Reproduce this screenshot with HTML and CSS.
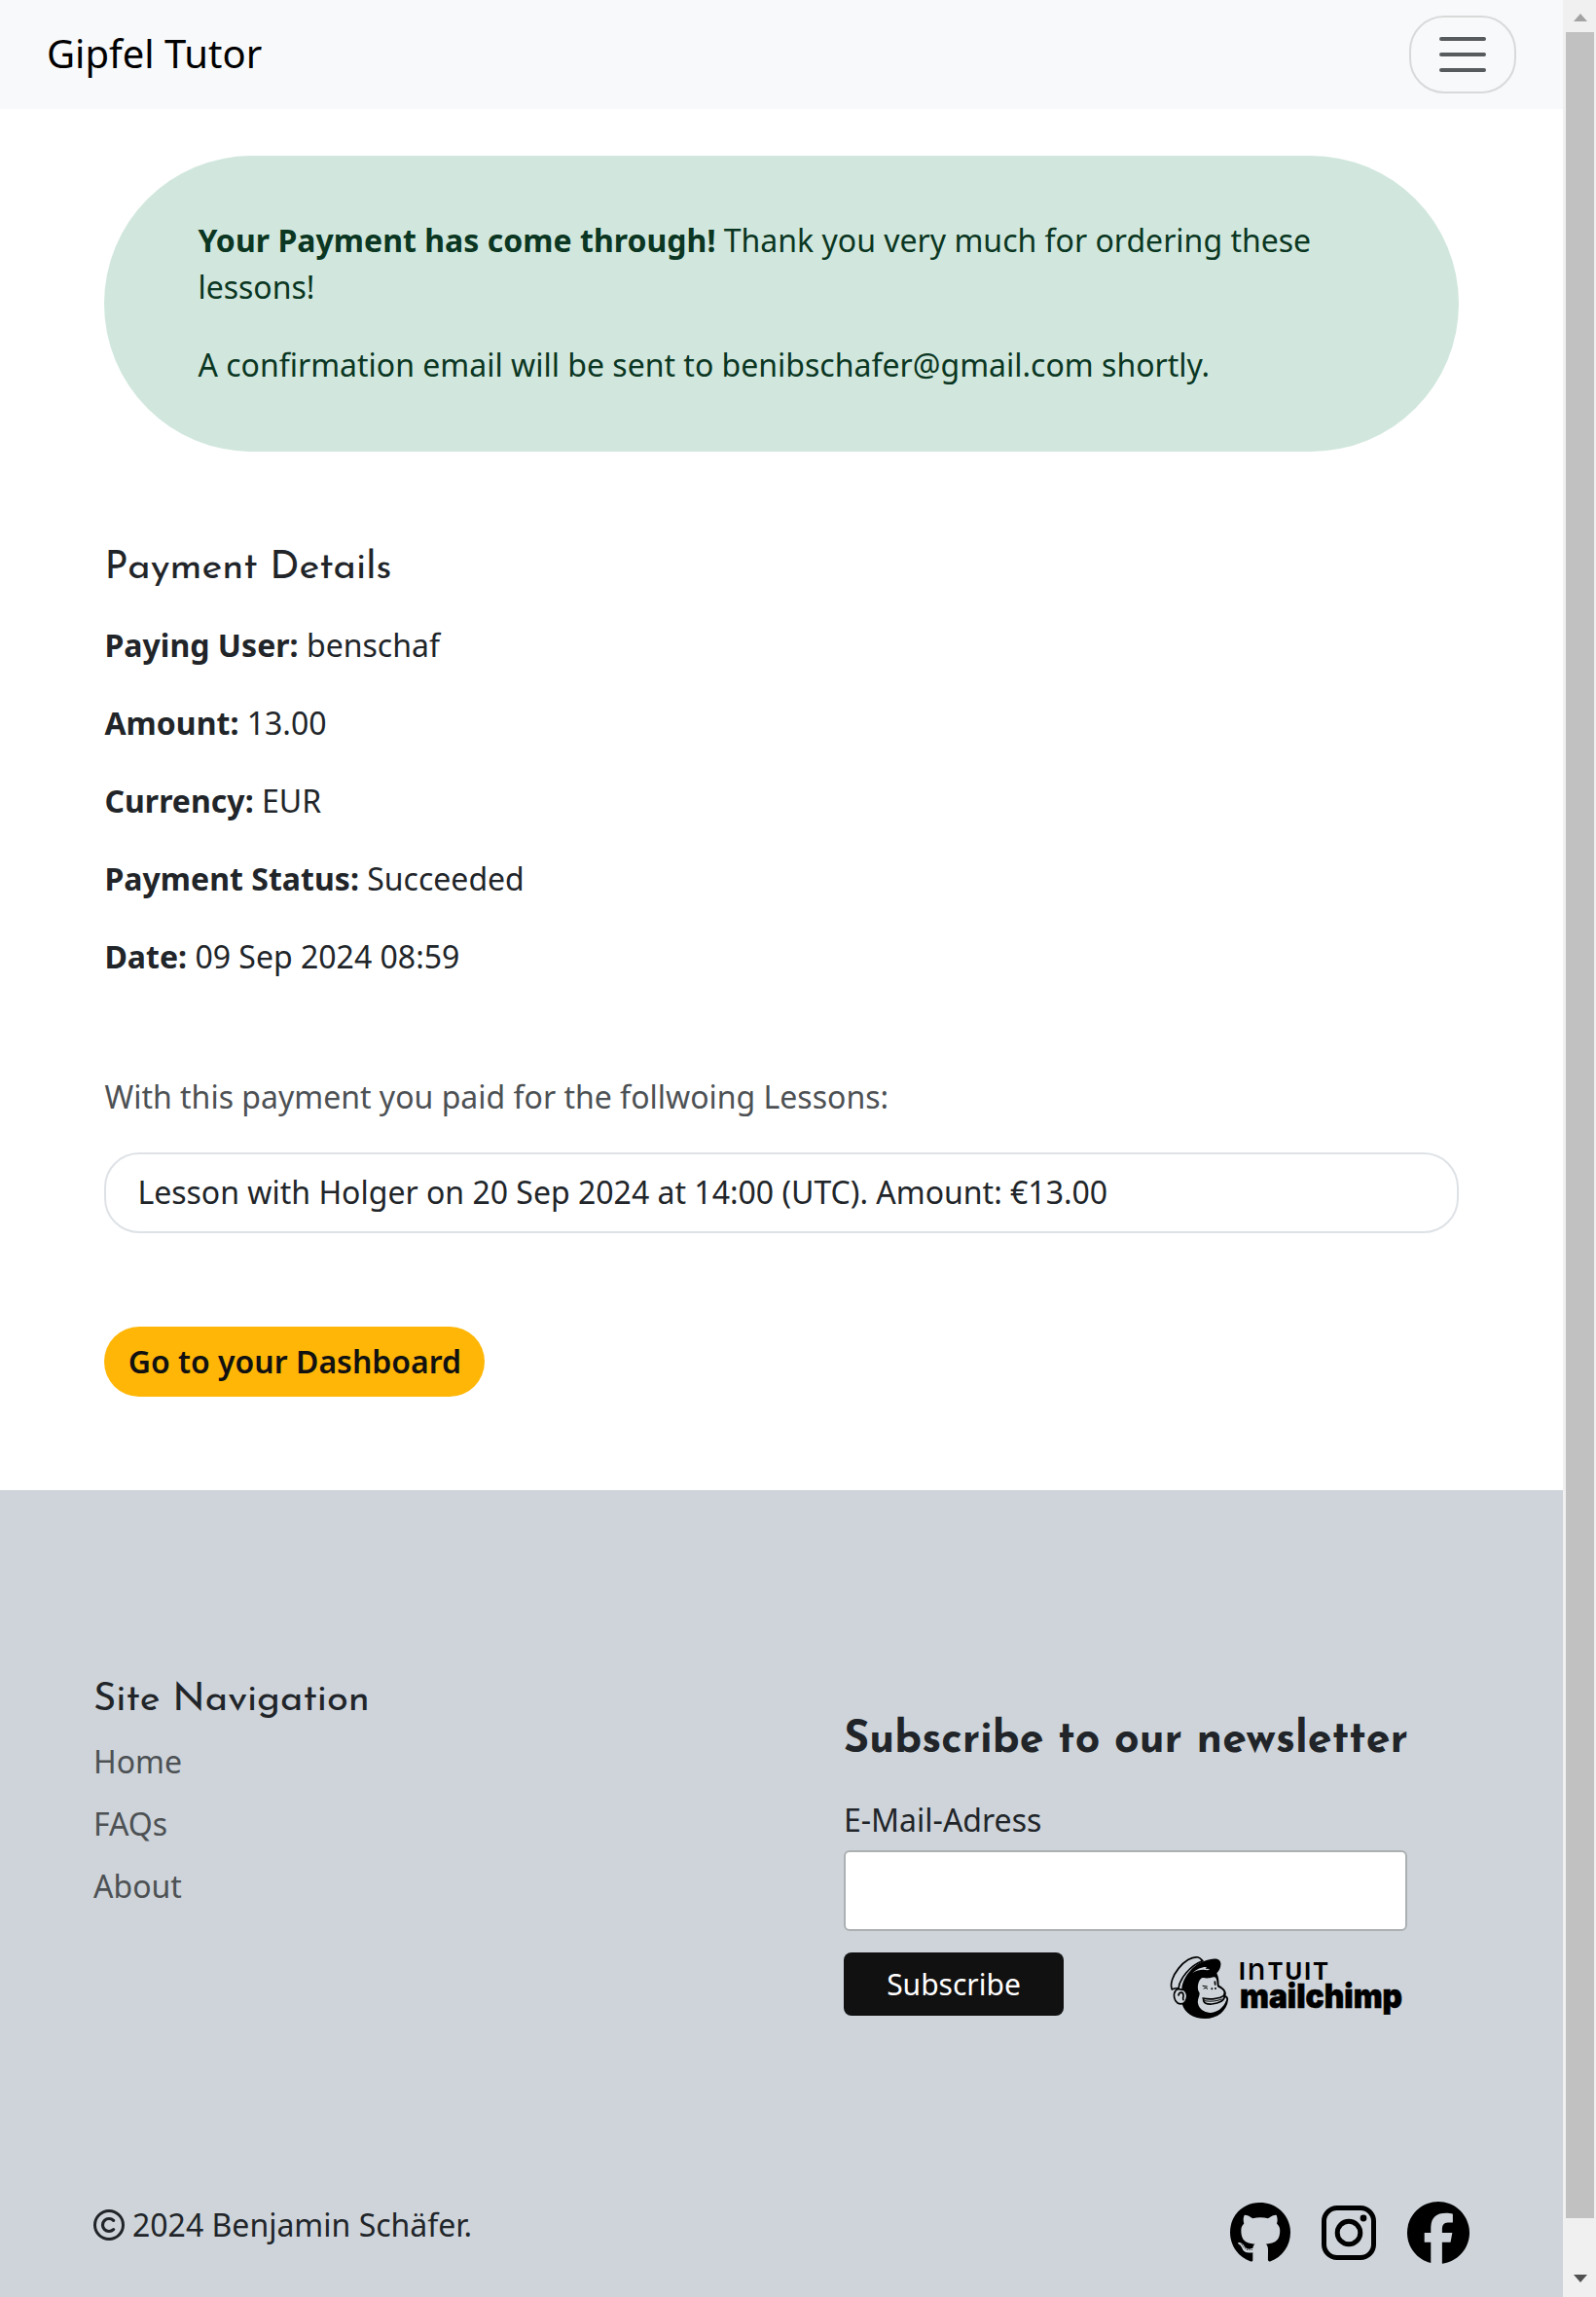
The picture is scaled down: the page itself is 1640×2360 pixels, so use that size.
FILE: index.html
```html
<!DOCTYPE html>
<html lang="en">
<head>
<meta charset="utf-8">
<title>Gipfel Tutor</title>
<link rel="stylesheet" href="styles.css">
</head>
<body>
<div class="page">
  <header class="navbar">
    <a class="brand">Gipfel Tutor</a>
    <button class="toggler" aria-label="Menu">
      <svg width="60" height="60" viewBox="0 0 30 30"><path stroke="#212529" stroke-opacity=".75" stroke-linecap="round" stroke-width="2" d="M4 7h22M4 15h22M4 23h22"/></svg>
    </button>
  </header>
  <main class="content">
    <section class="alert">
      <p><strong>Your Payment has come through!</strong> Thank you very much for ordering these lessons!</p>
      <p>A confirmation email will be sent to benibschafer@gmail.com shortly.</p>
    </section>
    <section class="details">
      <h2 class="heading details-title">Payment Details</h2>
      <p><strong>Paying User:</strong> benschaf</p>
      <p><strong>Amount:</strong> 13.00</p>
      <p><strong>Currency:</strong> EUR</p>
      <p><strong>Payment Status:</strong> Succeeded</p>
      <p><strong>Date:</strong> 09 Sep 2024 08:59</p>
    </section>
    <p class="lessons-intro">With this payment you paid for the follwoing Lessons:</p>
    <ul class="lessons"><li>Lesson with Holger on 20 Sep 2024 at 14:00 (UTC). Amount: €13.00</li></ul>
    <a class="dashboard">Go to your Dashboard</a>
  </main>
  <footer class="footer">
    <div class="footer-top">
      <nav class="site-nav">
        <h2 class="heading nav-title">Site Navigation</h2>
        <a>Home</a>
        <a>FAQs</a>
        <a>About</a>
      </nav>
      <form class="newsletter">
        <h2 class="heading newsletter-title">Subscribe to our newsletter</h2>
        <label for="email">E-Mail-Adress</label>
        <input id="email" type="email">
        <div class="actions">
          <button type="button" class="subscribe">Subscribe</button>
          <div class="mailchimp">
            <svg width="62" height="66" viewBox="67 57 186 198">
              <path d="M105 207C113 234 140 252 176 252C214 252 243 228 247 195C249 188 244 183 239 181C243 173 240 160 219 149C218 137 219 128 212 112C224 99 229 81 219 71C208 62 177 70 157 82C130 98 105 132 104 160Z"/>
              <path d="M162 130C167 123 176 128 186 127C196 127 205 119 210 128C214 137 211 149 216 155C233 162 237 170 231 180C240 186 245 192 240 198C233 219 211 234 191 234C171 233 157 221 154 205C151 191 162 181 158 171C151 162 152 142 162 130Z" fill="#ced4da"/>
              <path d="M74 162C59 128 116 56 154 63C162 65 164 70 168 74C129 88 97 130 94 159C84 156 78 161 74 162Z" fill="#ced4da" stroke="#000" stroke-width="5"/>
              <path d="M104 163C87 155 78 170 81 187C84 203 96 210 109 205C120 199 123 179 117 170C113 164 109 162 104 163Z" fill="#ced4da" stroke="#000" stroke-width="5"/>
              <g fill="none" stroke="#000" stroke-linecap="round" stroke-linejoin="round">
                <path stroke-width="5" d="M94 180C96 169 108 168 109 179C111 184 105 187 109 194M169 189C192 194 220 191 233 182M171 191C169 205 182 208 197 207C221 205 236 195 236 184"/>
                <path stroke-width="3" d="M175 197C193 201 217 197 226 192M169 151L182 153M172 159C176 156 180 157 183 160"/>
                <path stroke-width="5" d="M206 138L207 147"/>
              </g>
              <path d="M137 111C151 98 170 91 181 93L177 98L191 99L184 103C168 99 153 102 137 111Z" fill="#ced4da"/>
              <circle cx="197" cy="160" r="3"/><circle cx="208" cy="159" r="3"/>
            </svg>
            <svg class="wordmark" width="170" height="60" viewBox="0 0 170 60">
              <text class="intuit" x="-1" y="25" textLength="92" lengthAdjust="spacing">I<tspan class="tall">n</tspan>TUIT</text>
              <text class="chimp-name" x="0" y="54" textLength="167" lengthAdjust="spacingAndGlyphs">mailchimp</text>
            </svg>
          </div>
        </div>
      </form>
    </div>
    <div class="footer-bottom">
      <p class="copyright">
        <svg width="32" height="32" viewBox="0 0 32 32" fill="none" stroke="#212529" stroke-width="3"><circle cx="16" cy="16" r="14.5"/><path stroke-linecap="round" stroke-width="3.2" d="M20.6 11.4A6.5 6.5 0 1 0 20.6 20.6"/></svg>
        <span>2024 Benjamin Schäfer.</span>
      </p>
      <div class="social">
        <svg width="62" height="64" viewBox="0 0 496 512"><path d="M165.9 397.4c0 2-2.3 3.6-5.2 3.6-3.3.3-5.6-1.3-5.6-3.6 0-2 2.3-3.6 5.2-3.6 3-.3 5.6 1.3 5.6 3.6zm-31.1-4.5c-.7 2 1.3 4.3 4.3 4.9 2.6 1 5.6 0 6.2-2s-1.3-4.3-4.3-5.2c-2.6-.7-5.5.3-6.2 2.3zm44.2-1.7c-2.9.7-4.9 2.6-4.6 4.9.3 2 2.9 3.3 5.9 2.6 2.9-.7 4.9-2.6 4.6-4.6-.3-1.9-3-3.2-5.9-2.9zM244.8 8C106.1 8 0 113.3 0 252c0 110.9 69.8 205.8 169.5 239.2 12.8 2.3 17.3-5.6 17.3-12.1 0-6.2-.3-40.4-.3-61.4 0 0-70 15-84.7-29.8 0 0-11.4-29.1-27.8-36.6 0 0-22.9-15.7 1.6-15.4 0 0 24.9 2 38.6 25.8 21.9 38.6 58.6 27.5 72.9 20.9 2.3-16 8.8-27.1 16-33.7-55.9-6.2-112.3-14.3-112.3-110.5 0-27.5 7.6-41.3 23.6-58.9-2.6-6.5-11.1-33.3 3-67.9 20.9-6.5 69 27 69 27 20-5.6 41.5-8.5 62.8-8.5s42.8 2.9 62.8 8.5c0 0 48.1-33.6 69-27 14.1 34.7 5.6 61.4 3 67.9 16 17.7 25.8 31.5 25.8 58.9 0 96.5-58.9 104.2-114.8 110.5 9.2 7.9 17 22.9 17 46.4 0 33.7-.3 75.4-.3 83.6 0 6.5 4.6 14.4 17.3 12.1C428.2 457.8 496 362.9 496 252 496 113.3 383.5 8 244.8 8zM97.2 352.9c-1.3 1-1 3.3.7 5.2 1.6 1.6 3.9 2.3 5.2 1 1.3-1 1-3.3-.7-5.2-1.6-1.6-3.9-2.3-5.2-1zm-10.8-8.1c-.7 1.3.3 2.9 2.3 3.9 1.6 1 3.6.7 4.3-.7.7-1.3-.3-2.9-2.3-3.9-2-.6-3.6-.3-4.3.7zm32.4 35.6c-1.6 1.3-1 4.3 1.3 6.2 2.3 2.3 5.2 2.6 6.5 1 1.3-1.3.7-4.3-1.3-6.2-2.2-2.3-5.2-2.6-6.5-1zm-11.4-14.7c-1.6 1-1.6 3.6 0 5.9 1.6 2.3 4.3 3.3 5.6 2.3 1.6-1.3 1.6-3.9 0-6.2-1.4-2.3-4-3.3-5.6-2z"/></svg>
        <svg width="56" height="64" viewBox="0 0 56 64"><rect x="2.5" y="6.5" width="51" height="51" rx="13.5" fill="none" stroke="#000" stroke-width="5"/><circle cx="28" cy="32" r="11.8" fill="none" stroke="#000" stroke-width="5"/><circle cx="43" cy="17" r="3.4"/></svg>
        <svg width="64" height="64" viewBox="0 0 512 512"><path d="M512 256C512 114.6 397.4 0 256 0S0 114.6 0 256C0 376 82.7 476.8 194.2 504.5V334.2H141.4V256h52.8V222.3c0-87.1 39.4-127.5 125-127.5c16.2 0 44.2 3.2 55.7 6.4V172c-6-.6-16.5-1-29.6-1c-42 0-58.2 15.9-58.2 57.2V256h83.6l-14.4 78.2H287V510.1C413.8 494.8 512 386.9 512 256h0z"/></svg>
      </div>
    </div>
  </footer>
</div>
<div class="scrollbar">
  <span class="arrow-up"></span>
  <span class="thumb"></span>
  <span class="arrow-down"></span>
</div>
</body>
</html>
```
FILE: styles.css
```css
* { box-sizing: border-box; margin: 0; padding: 0; }
body {
  display: flex;
  height: 2360px;
  overflow: hidden;
  background: #fff;
  color: #212529;
  font: 32px/48px "Noto Sans", sans-serif;
}
svg { display: block; flex: none; }
strong { font-weight: 700; letter-spacing: .03px; }
.page { width: 1606px; display: flex; flex-direction: column; }
.navbar {
  height: 112px;
  padding: 0 48px;
  background: #f8f9fa;
  display: flex;
  align-items: center;
  justify-content: space-between;
}
.brand { padding-bottom: 2px; font-size: 40px; line-height: 60px; color: #000; }
.toggler {
  width: 110px;
  height: 80px;
  border: 2px solid rgba(33, 37, 41, .15);
  border-radius: 36px;
  background: transparent;
  display: flex;
  align-items: center;
  justify-content: center;
}
.content { height: 1419px; padding: 48px 107px 0 107.4px; }
.alert {
  height: 304px;
  padding: 63px 96px;
  border-radius: 160px;
  background: #d1e7dd;
  color: #0a3622;
}
.alert p + p { margin-top: 32px; }
.heading {
  font-family: "Josefin Sans", Lato, sans-serif;
  font-weight: 400;
  font-size: 40px;
  line-height: 48px;
  white-space: nowrap;
}
.details { padding-top: 96px; }
.details-title { margin-bottom: 31px; }
.details p { margin-bottom: 32px; }
.lessons-intro { margin-top: 96px; color: #4d5154; }
.lessons {
  list-style: none;
  height: 83px;
  margin-top: 33px;
  padding: 15px 32px;
  border: 2px solid #dee2e6;
  border-radius: 36px;
}
.dashboard {
  display: flex;
  align-items: center;
  justify-content: center;
  width: 391px;
  height: 72px;
  margin-top: 96px;
  border-radius: 36px;
  background: #ffb606;
  color: #111;
  font-weight: 600;
  white-space: nowrap;
}
.footer { flex: 1; background: #ced4da; }
.footer-top { display: flex; height: 731px; padding: 192px 0 0 96px; }
.site-nav { width: 771px; display: flex; flex-direction: column; gap: 16px; color: #4d5154; }
.nav-title { color: #212529; margin-bottom: -1px; }
.newsletter { width: 579px; padding-top: 42px; display: flex; flex-direction: column; }
.newsletter-title { font-size: 44.8px; font-weight: 700; }
.newsletter label { margin-top: 33px; }
.newsletter input {
  width: 579px;
  height: 83px;
  margin-top: 7px;
  border: 2px solid #abb0b2;
  border-radius: 6px;
  background: #fff;
}
.actions { display: flex; justify-content: space-between; margin-top: 22px; }
.subscribe {
  width: 226px;
  height: 65px;
  border: 0;
  border-radius: 8px;
  background: #111;
  color: #fff;
  font: 400 30px/60px "Noto Sans", sans-serif;
}
.mailchimp { display: flex; width: 244px; gap: 10px; padding-top: 3px; }
.wordmark { overflow: visible; }
.intuit { font: 700 24px Inter, sans-serif; }
.tall { font-size: 31px; font-weight: 500; }
.chimp-name { font: 900 34px Inter, sans-serif; stroke: #000; stroke-width: .6px; }
.footer-bottom { display: flex; justify-content: space-between; padding: 0 96px; }
.copyright { display: flex; align-items: center; gap: 8px; height: 48px; }
.social { display: flex; gap: 32px; }
.scrollbar {
  width: 34px;
  padding: 14px 2px 14px 3px;
  background: #f0f0f0;
  display: flex;
  flex-direction: column;
  align-items: center;
}
.arrow-up { border: 7.5px solid transparent; border-top: 0; border-bottom: 8px solid #a3a3a3; }
.thumb { width: 29px; height: 2246px; margin-top: 11px; background: #c1c1c1; }
.arrow-down { margin-top: 58px; border: 7.5px solid transparent; border-bottom: 0; border-top: 8px solid #505050; }
```
